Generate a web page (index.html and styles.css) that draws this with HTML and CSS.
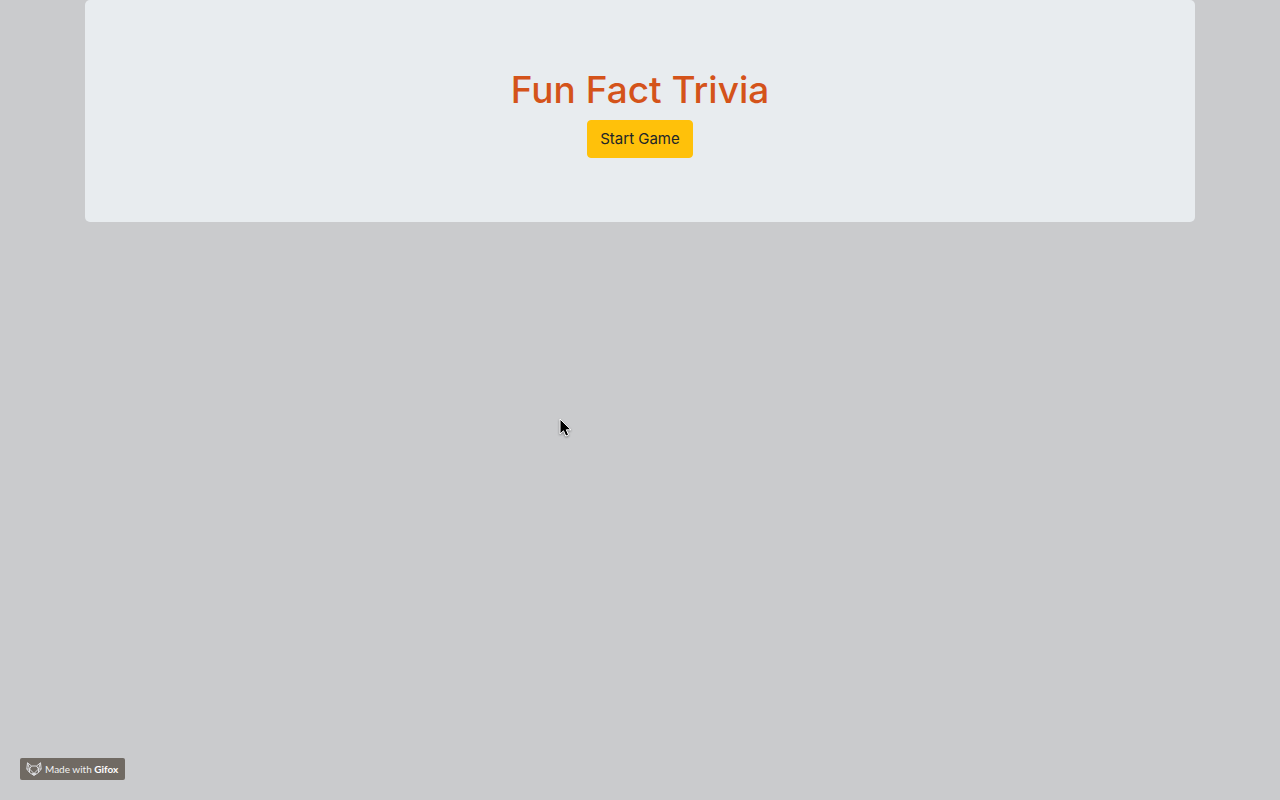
FILE: index.html
```html
<!DOCTYPE html>
<html lang="en">
<head>
<meta charset="utf-8">
<meta name="viewport" content="width=device-width, initial-scale=1">
<title>Fun Fact Trivia</title>
<link rel="stylesheet" href="styles.css">
</head>
<body>
<main class="container">
  <section class="jumbotron">
    <h1 class="title">Fun Fact Trivia</h1>
    <button class="start" type="button">Start Game</button>
  </section>
</main>
<svg class="cursor" viewBox="0 0 14 20" aria-hidden="true">
  <path d="M1 1v15l3.5-3.2 2.3 5.3 2.8-1.2-2.3-5.1H12z" fill="#000" stroke="#fff" stroke-width="1"/>
</svg>
<footer class="badge">
  <svg class="fox" viewBox="0 0 16 14" aria-hidden="true">
    <path d="M1.500 .8 5.500 4h5l4-3.200.7 6.200L12.500 10.500 8 13.500 3.500 10.500.8 7z"/>
    <path d="M1.500 .8l2 6.200L8 11.500 12.500 7l2-6.200M.8 7h2.700l2-3M15.200 7h-2.700l-2-3M3.500 7v3.500M12.500 7v3.500"/>
    <path class="nose" d="M6.500 11.500h3L8 13.200z"/>
  </svg>
  <span>Made with <b>Gifox</b></span>
</footer>
</body>
</html>
```
FILE: styles.css
```css
* {
  box-sizing: border-box;
}

body {
  margin: 0;
  min-height: 100vh;
  background: #cacbcd;
  font-family: Inter, "Liberation Sans", sans-serif;
  font-size: 15px;
  line-height: 24px;
}

.container {
  max-width: 1140px;
  margin: 0 auto;
  padding: 0 15px;
}

.jumbotron {
  padding: 64px 32px;
  border-radius: 5px;
  background: #e8ecef;
  text-align: center;
}

.title {
  margin: 0 0 4px;
  color: #d4531a;
  font-size: 37px;
  font-weight: 500;
  line-height: 52px;
}

.start {
  display: inline-block;
  vertical-align: top;
  padding: 6px 12px;
  border: 1px solid #ffc10a;
  border-radius: 4px;
  background: #ffc10a;
  color: #212529;
  font: inherit;
}

.cursor {
  position: absolute;
  top: 418px;
  left: 559px;
  width: 14px;
  height: 20px;
  filter: drop-shadow(0 1px 1px rgba(0, 0, 0, 0.4));
}

.badge {
  position: fixed;
  bottom: 20px;
  left: 20px;
  display: flex;
  align-items: center;
  gap: 3px;
  height: 22px;
  padding: 0 7px 0 6px;
  border-radius: 2px;
  background: #706a63;
  color: #f2f2f2;
  font-family: Lato, "Liberation Sans", sans-serif;
  font-size: 10px;
  line-height: 20px;
  white-space: nowrap;
}

.badge b {
  color: #fff;
}

.fox {
  width: 16px;
  height: 14px;
  fill: none;
  stroke: #dcdde0;
  stroke-width: 1;
  stroke-linejoin: round;
}

.nose {
  fill: #fff;
}
```
